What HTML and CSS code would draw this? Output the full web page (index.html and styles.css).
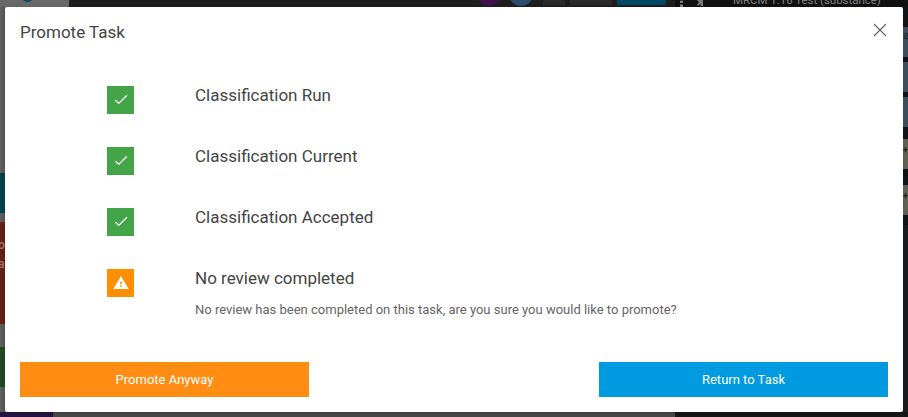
FILE: index.html
```html
<!DOCTYPE html>
<html lang="en">
<head>
<meta charset="utf-8">
<title>Promote Task</title>
<link rel="stylesheet" href="styles.css">
</head>
<body>
<div class="page">
  <div class="nav">
    <i class="avatar teal"></i>
  </div>
  <div class="bar">
    <i class="avatar purple"></i><i class="avatar steel"></i>
    <i class="tab"></i><i class="tab wide"></i><i class="tab active"></i>
  </div>
  <div class="panel-top">
    <svg class="tools" width="28" height="7" viewBox="0 0 28 7"><path d="M0 .8h3v2H0zM0 4.5h3V7H0z" fill="#858585"/><path d="M17 0h6v6h-2l-1-2-2 2-1-1.500 2-2z" fill="#777"/></svg>
    <span class="concept">MRCM 1.16 Test (substance)</span>
  </div>
  <div class="left">
    <i class="block cyan"></i>
    <i class="block red"><span>o</span><span>ar</span></i>
    <i class="block green"></i>
  </div>
  <div class="right">
    <i class="row first">a</i><i class="row"></i><i class="row"></i>
    <i class="row olive gap">+</i><i class="row olive">+</i>
    <i class="rest"></i>
  </div>
  <div class="foot"><i class="violet"></i><i class="grey"></i><i class="dark"></i></div>
</div>

<section class="modal" role="dialog">
  <header class="head">
    <h1>Promote Task</h1>
    <svg class="close" width="14" height="14" viewBox="0 0 14 14"><path d="M1 1l12 12M13 1L1 13" fill="none" stroke="#626262" stroke-width="1.15"/></svg>
  </header>
  <div class="checks">
    <div class="check"><span class="box"><svg width="24" height="24" viewBox="0 0 24 24"><path d="M6.400 12.200l3.300 3.200 8.200-8.200" fill="none" stroke="#fff" stroke-width="1.300"/></svg></span><h2>Classification Run</h2></div>
    <div class="check"><span class="box"><svg width="24" height="24" viewBox="0 0 24 24"><path d="M6.400 12.200l3.300 3.200 8.200-8.200" fill="none" stroke="#fff" stroke-width="1.300"/></svg></span><h2>Classification Current</h2></div>
    <div class="check"><span class="box"><svg width="24" height="24" viewBox="0 0 24 24"><path d="M6.400 12.200l3.300 3.200 8.200-8.200" fill="none" stroke="#fff" stroke-width="1.300"/></svg></span><h2>Classification Accepted</h2></div>
    <div class="check"><span class="box warn"><svg width="16" height="16" viewBox="0 0 24 24"><path d="M.5 21h23L12 1.500.5 21zm12.700-3h-2.400v-2.200h2.400V18zm0-4h-2.400v-4h2.400v4z" fill="#fff"/></svg></span><div><h2>No review completed</h2><p>No review has been completed on this task, are you sure you would like to promote?</p></div></div>
  </div>
  <footer class="actions">
    <button class="btn promote"><span>Promote Anyway</span></button>
    <button class="btn return"><span>Return to Task</span></button>
  </footer>
</section>
</body>
</html>
```

FILE: styles.css
```css
* { box-sizing: border-box; }
body { margin: 0; height: 417px; overflow: hidden; font-family: Roboto, sans-serif; }
i { display: block; font-style: normal; }
h1, h2, p { margin: 0; font-weight: 400; }

.page { display: grid; grid-template: 7px 405px 5px / 69px 606px 233px; height: 417px; background: #161616; }
.nav { background: #696969; overflow: hidden; padding-left: 21px; }
.avatar { width: 24px; height: 24px; border-radius: 50%; margin-top: -18px; flex: none; }
.teal { width: 13px; height: 13px; margin-top: -11px; background: #004b68; }
.bar { background: #1e1e1e; overflow: hidden; display: flex; padding-left: 408px; align-items: flex-start; padding-left: 402px; }
.purple { background: #3f1148; }
.steel { background: #2c4d6c; margin-left: 8px; }
.bar { padding-left: 408px; }
.tab { width: 22px; height: 5px; background: #2a2a2a; margin-left: 10px; }
.tab.wide { width: 42px; margin-left: 5px; }
.tab.active { width: 49px; margin-left: 5px; background: #004866; }
.panel-top { background: #111; overflow: hidden; display: flex; align-items: flex-start; padding-left: 5px; }
.tools { flex: none; }
.concept { margin: -7px 0 0 25px; font-size: 11.45px; line-height: 14px; color: #818181; white-space: nowrap; }
.left { background: linear-gradient(90deg, #606060, #565656 5px); padding-top: 166px; }
.block { width: 5px; overflow: hidden; }
.cyan { height: 40px; background: #00434a; }
.red { height: 102px; margin-top: 9px; padding-top: 14px; background: #64201a; color: #a87470; font-size: 12px; font-weight: 500; line-height: 19px; }
.red span { display: block; margin-left: -2px; }
.green { height: 40px; margin-top: 23px; background: #204822; }
.right { grid-column: 3; justify-self: end; width: 5px; background: #111517; padding-top: 20px; display: flex; flex-direction: column; }
.row { height: 30px; margin-bottom: 5px; background: #3e5060; overflow: hidden; font-size: 11px; line-height: 17px; color: #18222c; }
.olive { margin-bottom: 16px; background: #616450; font-size: 9px; font-weight: 700; line-height: 23px; color: #202018; }
.gap { margin-top: 7px; }
.rest { flex: 1; margin-top: -6px; background: #1a1e20; }
.foot { grid-column: 1 / 4; display: flex; }
.violet { width: 53px; background: #251443; }
.grey { width: 622px; background: #484848; }
.dark { flex: 1; background: #161616; }

.modal { position: absolute; left: 5px; top: 7px; width: 898px; height: 405px; background: #fff; border-radius: 2px; padding: 15px; display: flex; flex-direction: column; box-shadow: 0 1px 4px rgba(0,0,0,.15); }
.head { display: flex; justify-content: space-between; height: 64px; padding-right: 1.5px; }
.head h1 { font-size: 17px; line-height: 20px; color: #444; }
.close { margin-top: 1px; }
.checks { flex: 1; padding-left: 87px; }
.check { display: flex; height: 61px; }
.box { width: 27px; height: 28px; flex: none; margin-right: 61px; background: #43a547; display: flex; align-items: center; justify-content: center; }
.warn { background: #ff8f00; }
.check h2 { font-size: 17px; line-height: 19px; color: #444; white-space: nowrap; }
.check p { margin-top: 14px; font-size: 13px; line-height: 16px; color: #666; white-space: nowrap; }
.actions { display: flex; justify-content: space-between; height: 35px; }
.btn { width: 289px; border: 0; padding: 0; color: #fff; font: 13px/35px Roboto, sans-serif; }
.promote { background: #ff8c13; }
.return { background: #009ae1; }
```
